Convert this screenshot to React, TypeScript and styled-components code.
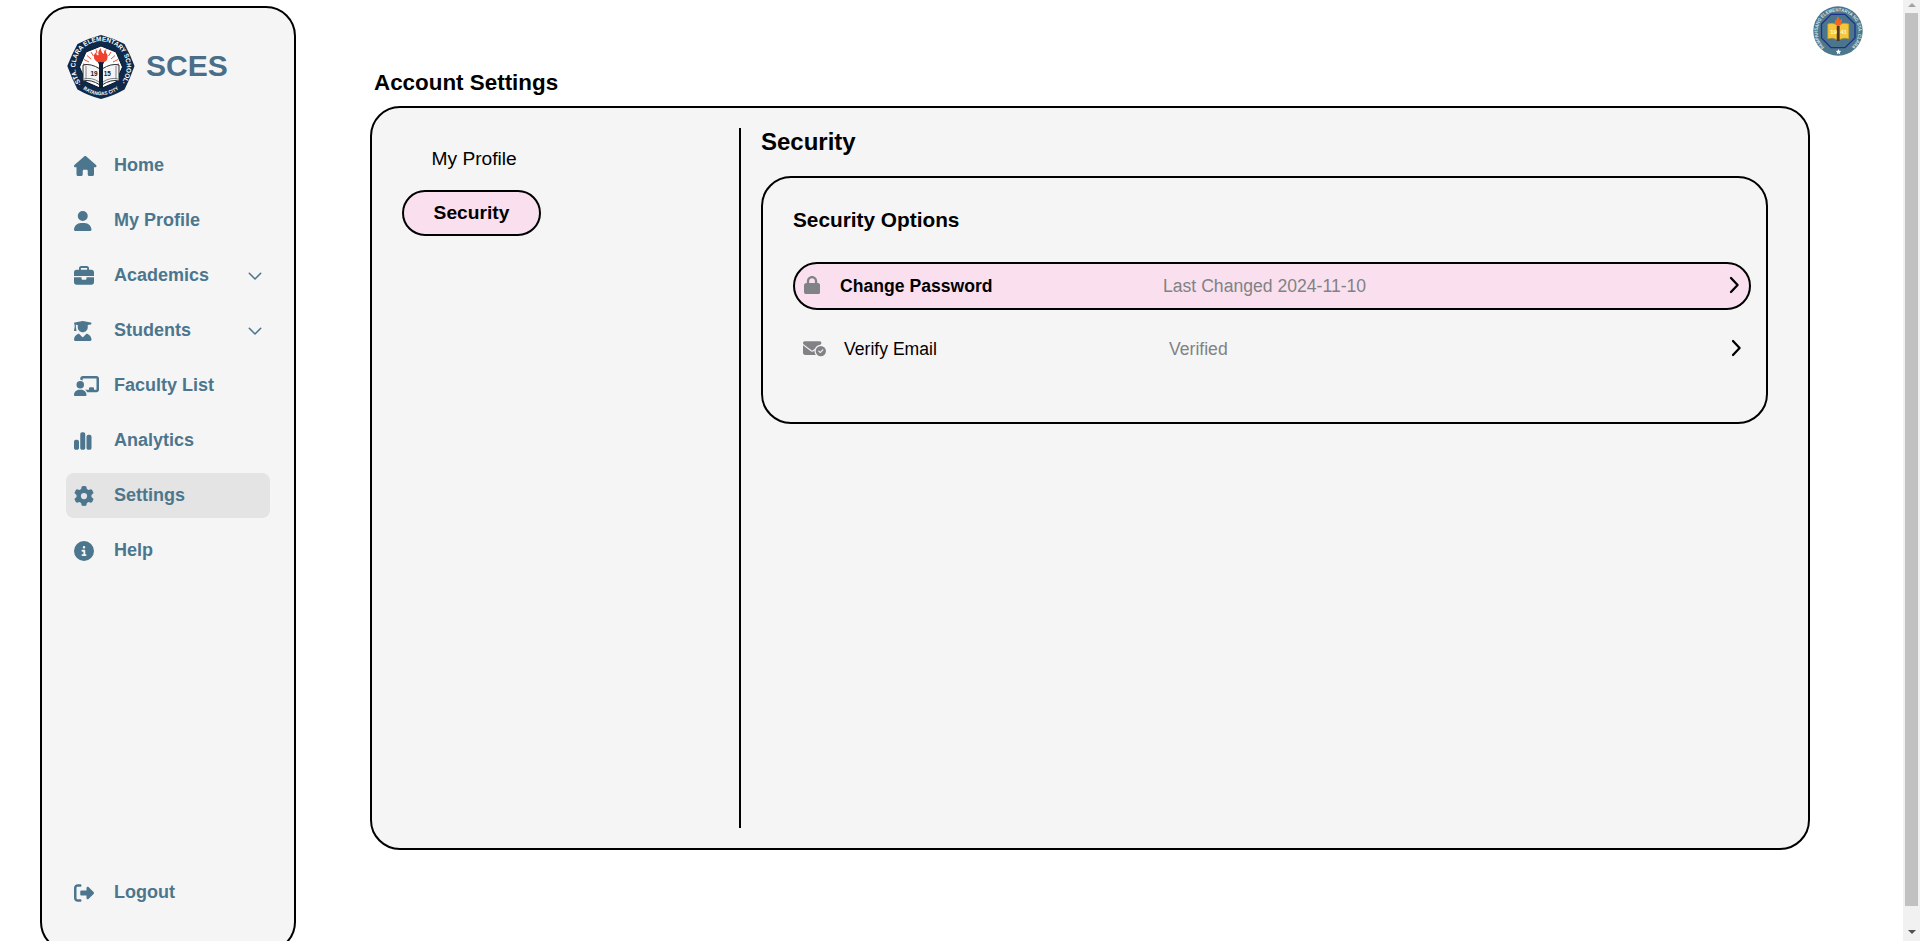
import React from "react";
import styled, { createGlobalStyle } from "styled-components";
import {
  FaHouse,
  FaUser,
  FaBriefcase,
  FaUserGraduate,
  FaChalkboardUser,
  FaChartSimple,
  FaGear,
  FaCircleInfo,
  FaRightFromBracket,
  FaLock,
  FaEnvelopeCircleCheck,
} from "react-icons/fa6";

const Global = createGlobalStyle`
  * { box-sizing: border-box; }
  html, body { margin: 0; height: 100%; overflow: hidden; }
  body { background: #fff; color: #000; font-family: Arial, "Liberation Sans", sans-serif; }
  h1, h2, h3 { margin: 0; font-weight: 700; }
  svg { display: block; }
`;

const Page = styled.div`
  display: flex;
  height: 941px;
  overflow: hidden;
`;

const Sidebar = styled.aside`
  display: flex;
  flex-direction: column;
  flex: none;
  width: 256px;
  height: 946px;
  margin: 6px 0 0 40px;
  padding: 26px 24px 35px;
  background: #f5f5f5;
  border: 2px solid #000;
  border-radius: 30px;
`;

const Brand = styled.div`
  display: flex;
  align-items: center;
  gap: 10px;
  height: 66px;
`;

const BrandName = styled.span`
  padding-bottom: 2px;
  font-size: 30px;
  font-weight: 700;
  line-height: 34px;
  color: #4a6d88;
`;

const Nav = styled.nav`
  display: flex;
  flex-direction: column;
  gap: 10px;
  margin-top: 43px;
`;

const NavLink = styled.a<{ $active?: boolean; $last?: boolean }>`
  display: flex;
  align-items: center;
  height: 45px;
  padding: 0 8px;
  margin-top: ${(p) => (p.$last ? "auto" : "0")};
  border-radius: 8px;
  background: ${(p) => (p.$active ? "#e4e4e4" : "transparent")};
  color: #4c768d;
  font-size: 18px;
  font-weight: 700;
`;

const NavIcon = styled.span<{ $ratio?: number }>`
  flex: none;
  width: 40px;
  font-size: 20px;

  svg { width: ${(p) => p.$ratio ?? 1}em; }
`;

const NavLabel = styled.span`
  flex: 1;
  line-height: 21px;
`;

const Caret = styled.svg`
  width: 14px;
  height: 9px;
  margin-top: 2px;
`;

const Main = styled.main`
  flex: 1;
  padding: 69px 0 0 74px;
`;

const PageTitle = styled.h1`
  padding-left: 4px;
  font-size: 22.4px;
  line-height: 27px;
`;

const Panel = styled.section`
  display: flex;
  width: 1440px;
  height: 744px;
  margin-top: 10px;
  padding: 20px 0;
  background: #f5f5f5;
  border: 2px solid #000;
  border-radius: 30px;
`;

const Tabs = styled.div`
  display: flex;
  flex-direction: column;
  align-items: flex-start;
  gap: 8px;
  width: 369px;
  padding: 8px 0 0 30px;
  border-right: 2px solid #000;
`;

const Tab = styled.button<{ $active?: boolean }>`
  height: 46px;
  padding: 0 ${(p) => (p.$active ? "29.6px" : "27.5px")};
  border: 2px solid ${(p) => (p.$active ? "#000" : "transparent")};
  border-radius: 23px;
  background: ${(p) => (p.$active ? "#fae0ee" : "transparent")};
  color: #000;
  font: ${(p) => (p.$active ? 700 : 400)} 19.2px Arial, "Liberation Sans", sans-serif;
`;

const Content = styled.div`
  padding-left: 20px;
`;

const SectionTitle = styled.h2`
  font-size: 24px;
  line-height: 28px;
`;

const Card = styled.div`
  display: flex;
  flex-direction: column;
  width: 1007px;
  height: 248px;
  margin-top: 20px;
  padding: 30px 15px 0 30px;
  border: 2px solid #000;
  border-radius: 30px;
`;

const CardTitle = styled.h3`
  margin-bottom: 30px;
  font-size: 20.8px;
  line-height: 24px;
`;

const Option = styled.div<{ $active?: boolean }>`
  display: grid;
  grid-template-columns: ${(p) => (p.$active ? "37px 323px" : "42px 325px")} 1fr auto;
  align-items: center;
  height: ${(p) => (p.$active ? "48px" : "46px")};
  margin-top: ${(p) => (p.$active ? "0" : "16px")};
  padding: ${(p) => (p.$active ? "0 9px 0 8px" : "0 9px")};
  border: ${(p) => (p.$active ? "2px solid #000" : "none")};
  border-radius: 24px;
  background: ${(p) => (p.$active ? "#fae0ee" : "transparent")};
  font-size: 17.6px;
`;

const OptionIcon = styled.span<{ $ratio: number }>`
  padding: 0 0 2px 1px;
  color: #808285;
  font-size: 18.4px;

  svg { width: ${(p) => p.$ratio}em; }
`;

const OptionName = styled.span<{ $bold?: boolean }>`
  font-weight: ${(p) => (p.$bold ? 700 : 400)};
`;

const OptionStatus = styled.span`
  color: #808285;
`;

const Arrow = styled.svg`
  width: 11px;
  height: 18px;
  margin-bottom: 2px;
`;

const Profile = styled.div`
  flex: none;
  width: 50px;
  height: 50px;
  margin: 6px 40px 0 0;
`;

const ScrollTrack = styled.div`
  display: flex;
  flex-direction: column;
  align-items: center;
  flex: none;
  width: 17px;
  padding: 3px 0 7px;
  background: #f1f1f1;
`;

const ScrollThumb = styled.div`
  width: 13px;
  height: 893px;
  margin: 6px 0 24px;
  background: #c1c1c1;
`;

const Triangle = styled.div<{ $down?: boolean }>`
  border: solid transparent;
  border-width: ${(p) => (p.$down ? "4px 4px 0" : "0 4px 4px")};
  border-top-color: ${(p) => (p.$down ? "#505050" : "transparent")};
  border-bottom-color: ${(p) => (p.$down ? "transparent" : "#a3a3a3")};
`;

const sealFont = 'Arial, "Liberation Sans", sans-serif';

function SchoolSeal() {
  return (
    <svg width="70" height="66" viewBox="66 34 70 66">
      <defs>
        <path id="sealTop" d="M81.8 83.8 A25.6 25.6 0 1 1 120.2 83.8" />
        <path id="sealBottom" d="M81 87 A28.6 28.6 0 0 0 121 87" />
      </defs>
      <path
        d="M101 35 Q113 38 124.5 44 Q130 54 134.5 66 Q130 79 124.5 89.5 Q113 96 101 99 Q89 96 77.5 89.5 Q72 79 67.3 66 Q72 54 77.5 44 Q89 38 101 35Z"
        fill="#0e2949"
      />
      <path d="M101 46 L116 52 L122.5 67 L116 82 L101 88.5 L86 82 L79.5 67 L86 52Z" fill="#fff" stroke="#07162b" strokeWidth="1" />
      <path d="M83 64L87 65M84 59.5L89 62M87 55.5L91 59M91 52L93.5 56M119 64L115 65M118 59.5L113 62M115 55.5L111 59M111 52L108.5 56M96 49.5L97 53M106 49.5L105 53" stroke="#ef4b36" strokeWidth="1" fill="none" />
      <path d="M83 65 Q91 63 100 69 L100 85 Q91 79 83 81Z M119 65 Q111 63 102 69 L102 85 Q111 79 119 81Z" fill="#f4f4f4" stroke="#252a30" strokeWidth="1" />
      <path d="M86 66V79M116 66V79M84 79 Q92 77 99 82M118 79 Q110 77 103 82" stroke="#4b5057" strokeWidth=".7" fill="none" />
      <path d="M97 60 H105 L103 64.5 L103 88 H99 L99 64.5Z" fill="#0c1c31" />
      <path d="M95 60 Q92 55 96.5 52 Q96 56 98.5 55 Q97.5 51 101 48 Q100.5 52 104 54 Q104.5 51 103.5 49.5 Q109.5 55 107 60 Q104.5 63 101 62 Q97 63 95 60Z" fill="#f0412d" />
      <text x="90.5" y="75.8" fontFamily={sealFont} fontSize="6.4" fontWeight="700" fill="#15191e">19</text>
      <text x="103.8" y="75.8" fontFamily={sealFont} fontSize="6.4" fontWeight="700" fill="#15191e">15</text>
      <text fontFamily={sealFont} fontSize="6.6" fontWeight="700" fill="#fff">
        <textPath href="#sealTop" textLength="115" lengthAdjust="spacingAndGlyphs">·STA. CLARA ELEMENTARY SCHOOL·</textPath>
      </text>
      <text fontFamily={sealFont} fontSize="5" fontWeight="700" fill="#fff">
        <textPath href="#sealBottom" startOffset="3" textLength="38" lengthAdjust="spacingAndGlyphs">BATANGAS CITY</textPath>
      </text>
    </svg>
  );
}

function ProfileSeal() {
  return (
    <svg width="50" height="50" viewBox="0 0 50 50">
      <defs>
        <path id="profileArc" d="M11.5 41 A20.4 20.4 0 1 1 38.5 41" />
      </defs>
      <circle cx="25" cy="25" r="24.7" fill="#4d778c" />
      <path d="M18 8.3H32L42 18V32L32 41.7H18L8.5 32V18Z" fill="#4b748d" stroke="#20318c" strokeWidth="1.3" />
      <path d="M14.8 18 Q19.5 16 24.3 18.8 V33.8 Q20 31 14.8 32.7Z M35.8 18 Q30 16 26 18.8 V33.8 Q31 31 35.8 32.7Z" fill="#f4c83a" stroke="#c99b25" strokeWidth=".7" />
      <path d="M23.8 20H26.6V35H23.8Z" fill="#513520" />
      <path d="M22.2 18 Q21 14.5 23.5 13 L24 15 L24.2 10.5 Q27 12 26.5 15 L28.5 12.5 Q29.8 16 27.5 19 Q24.5 21.5 22.2 18Z" fill="#f36722" />
      <text x="17.2" y="27.7" fontFamily={sealFont} fontSize="6" fontWeight="700" fill="#fff7c9">19</text>
      <text x="27.2" y="27.7" fontFamily={sealFont} fontSize="6" fontWeight="700" fill="#fff7c9">41</text>
      <text fontFamily={sealFont} fontSize="4.8" fontWeight="700" fill="#d5e2e9">
        <textPath href="#profileArc" textLength="98" lengthAdjust="spacingAndGlyphs">PAMPAHSANG ELEMENTARYA NG STA. CLARA</textPath>
      </text>
      <path d="M25.5 43 L26.3 44.8 L28.2 45 L26.8 46.3 L27.2 48.2 L25.5 47.2 L23.8 48.2 L24.2 46.3 L22.8 45 L24.7 44.8Z" fill="#fff" />
    </svg>
  );
}

function RowArrow() {
  return (
    <Arrow viewBox="0 0 11 18">
      <path d="M2 2L8.6 9L2 16" fill="none" stroke="#000" strokeWidth="2.3" strokeLinecap="round" strokeLinejoin="round" />
    </Arrow>
  );
}

const links = [
  { label: "Home", icon: <FaHouse />, ratio: 1.125 },
  { label: "My Profile", icon: <FaUser />, ratio: 0.875 },
  { label: "Academics", icon: <FaBriefcase />, expandable: true },
  { label: "Students", icon: <FaUserGraduate />, ratio: 0.875, expandable: true },
  { label: "Faculty List", icon: <FaChalkboardUser />, ratio: 1.25 },
  { label: "Analytics", icon: <FaChartSimple />, ratio: 0.875 },
  { label: "Settings", icon: <FaGear />, active: true },
  { label: "Help", icon: <FaCircleInfo /> },
];

export default function App() {
  return (
    <>
      <Global />
      <Page>
        <Sidebar>
          <Brand>
            <SchoolSeal />
            <BrandName>SCES</BrandName>
          </Brand>
          <Nav>
            {links.map((link) => (
              <NavLink key={link.label} $active={link.active}>
                <NavIcon $ratio={link.ratio}>{link.icon}</NavIcon>
                <NavLabel>{link.label}</NavLabel>
                {link.expandable && (
                  <Caret viewBox="0 0 14 9">
                    <path d="M1.3 1.3L7 7L12.7 1.3" fill="none" stroke="currentColor" strokeWidth="1.6" strokeLinecap="round" strokeLinejoin="round" />
                  </Caret>
                )}
              </NavLink>
            ))}
          </Nav>
          <NavLink $last>
            <NavIcon><FaRightFromBracket /></NavIcon>
            <NavLabel>Logout</NavLabel>
          </NavLink>
        </Sidebar>
        <Main>
          <PageTitle>Account Settings</PageTitle>
          <Panel>
            <Tabs>
              <Tab>My Profile</Tab>
              <Tab $active>Security</Tab>
            </Tabs>
            <Content>
              <SectionTitle>Security</SectionTitle>
              <Card>
                <CardTitle>Security Options</CardTitle>
                <Option $active>
                  <OptionIcon $ratio={0.875}><FaLock /></OptionIcon>
                  <OptionName $bold>Change Password</OptionName>
                  <OptionStatus>Last Changed 2024-11-10</OptionStatus>
                  <RowArrow />
                </Option>
                <Option>
                  <OptionIcon $ratio={1.25}><FaEnvelopeCircleCheck /></OptionIcon>
                  <OptionName>Verify Email</OptionName>
                  <OptionStatus>Verified</OptionStatus>
                  <RowArrow />
                </Option>
              </Card>
            </Content>
          </Panel>
        </Main>
        <Profile>
          <ProfileSeal />
        </Profile>
        <ScrollTrack>
          <Triangle />
          <ScrollThumb />
          <Triangle $down />
        </ScrollTrack>
      </Page>
    </>
  );
}
